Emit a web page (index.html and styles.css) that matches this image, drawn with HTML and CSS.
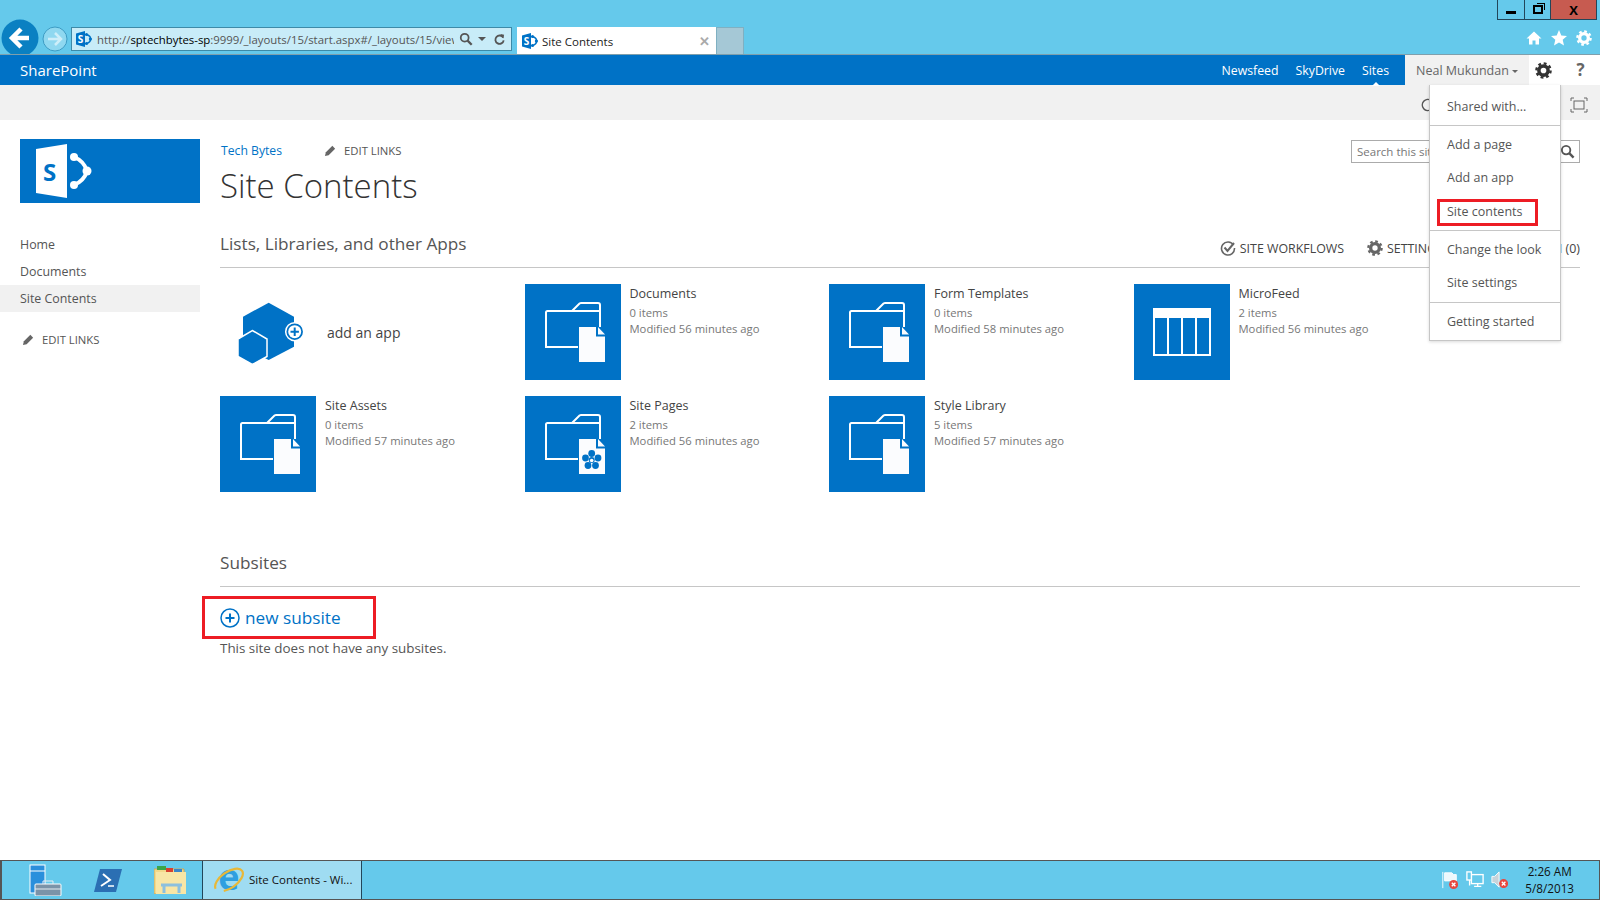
FILE: index.html
```html
<!DOCTYPE html>
<html lang="en">
<head>
    <meta charset="UTF-8">
    <title>Site Contents</title>
    <link rel="stylesheet" href="styles.css">
</head>
<body>
    <svg class="defs" width="0" height="0">
        <symbol id="gear" viewBox="0 0 24 24">
            <circle cx="12" cy="12" r="6.500" fill="none" stroke="currentColor" stroke-width="5"/>
            <circle cx="12" cy="12" r="10" fill="none" stroke="currentColor" stroke-width="3.400" stroke-dasharray="4 3.850"/>
        </symbol>
        <symbol id="pencil" viewBox="0 0 14 14">
            <path d="M1 13l1-4 7-7 3 3-7 7z" fill="currentColor"/>
        </symbol>
        <symbol id="magnifier" viewBox="0 0 16 16">
            <circle cx="9.500" cy="6.500" r="4.500" fill="none" stroke="currentColor" stroke-width="2"/>
            <path d="M6.200 9.800L1.500 14.500" stroke="currentColor" stroke-width="2.600"/>
        </symbol>
        <symbol id="favicon" viewBox="0 0 16 16">
            <path d="M0 2.500L9 0v16l-9-2.500z" fill="#0072c6"/>
            <text x="1.800" y="11.600" font-family="Open Sans" font-weight="700" font-size="10" fill="#fff">S</text>
            <path d="M10.500 3.500Q15 5 14.400 8Q15 11 10.500 12.500" fill="none" stroke="#0072c6" stroke-width="1.600"/>
            <circle cx="10.500" cy="3.500" r="1.600" fill="#0072c6"/>
            <circle cx="14.400" cy="8" r="1.600" fill="#0072c6"/>
            <circle cx="10.500" cy="12.500" r="1.600" fill="#0072c6"/>
        </symbol>
        <symbol id="folder" viewBox="0 0 96 96">
            <path d="M53 63H21V28.500a1.500 1.500 0 0 1 1.500-1.500H74M47 27l7.500-7.500a3 3 0 0 1 2-.5H73a2 2 0 0 1 2 2v22" fill="none" stroke="#fff" stroke-width="2"/>
            <path d="M54 43h17v9.500h9V78H54z" fill="#fbfcfe"/>
            <path d="M73 43l7 7.500h-7z" fill="#fbfcfe"/>
        </symbol>
        <symbol id="redx" viewBox="0 0 10 10">
            <circle cx="5" cy="5" r="5" fill="#e8473f"/>
            <path d="M3 3l4 4M7 3l-4 4" stroke="#fff" stroke-width="1.500"/>
        </symbol>
    </svg>

    <header class="chrome">
        <div class="win-row">
            <div class="win-btn win-min"><span class="glyph-min"></span></div>
            <div class="win-btn win-max"><span class="glyph-max"></span></div>
            <div class="win-btn win-close">X</div>
        </div>
        <div class="nav-row">
            <svg class="back-btn" viewBox="0 0 38 38">
                <circle cx="19" cy="19" r="18.500" fill="#0a80c2"/>
                <path d="M28 19H12M20 10l-9 9 9 9" fill="none" stroke="#fff" stroke-width="4.500"/>
            </svg>
            <svg class="fwd-btn" viewBox="0 0 26 26">
                <circle cx="13" cy="13" r="12" fill="#8fd8f0" stroke="#3d9cc4"/>
                <path d="M6 13h12M13 7l6 6-6 6" fill="none" stroke="#cdeef9" stroke-width="2.500"/>
            </svg>
            <div class="address">
                <svg class="fav"><use href="#favicon"/></svg>
                <div class="url">http://<b>sptechbytes-sp</b>:9999/_layouts/15/start.aspx#/_layouts/15/viewlsts.aspx</div>
                <svg class="addr-icon"><use href="#magnifier"/></svg>
                <span class="addr-caret"></span>
                <svg class="addr-refresh" viewBox="0 0 14 14">
                    <path d="M11 5a4.500 4.500 0 1 0 .5 3" fill="none" stroke="#555" stroke-width="2"/>
                    <path d="M8 1l4 1-1 4z" fill="#555"/>
                </svg>
            </div>
            <div class="tab">
                <svg class="fav"><use href="#favicon"/></svg>
                <span class="tab-title">Site Contents</span>
                <span class="tab-close">&#10005;</span>
            </div>
            <div class="tab-new"></div>
            <div class="chrome-tools">
                <svg class="tool" viewBox="0 0 16 16"><path d="M8 1.500L0.500 8.500H3v6h3.500v-4h3v4H13v-6h2.500z" fill="#fff"/></svg>
                <svg class="tool" viewBox="0 0 16 16"><path d="M8 0l2.300 5.400 5.700.5-4.300 3.800 1.300 5.800L8 12.500l-5 3 1.300-5.800L0 5.900l5.700-.5z" fill="#fff"/></svg>
                <svg class="tool tool-gear"><use href="#gear"/></svg>
            </div>
        </div>
    </header>

    <div class="suitebar">
        <div class="brand">SharePoint</div>
        <nav class="suite-links">
            <a>Newsfeed</a>
            <a>SkyDrive</a>
            <a class="current">Sites</a>
        </nav>
        <div class="user">Neal Mukundan<span class="caret"></span></div>
        <div class="suite-gear"><svg><use href="#gear"/></svg></div>
        <div class="suite-help">?</div>
    </div>

    <div class="ribbon">
        <svg class="ribbon-share" viewBox="0 0 14 14"><path d="M11 2.500A5.500 5.500 0 1 0 11 11.500" fill="none" stroke="#555" stroke-width="1.500"/></svg>
        <svg class="ribbon-focus" viewBox="0 0 18 16">
            <path d="M1 4V1h3M14 1h3v3M17 12v3h-3M4 15H1v-3" fill="none" stroke="#666"/>
            <rect x="4" y="4" width="10" height="8" fill="none" stroke="#666"/>
        </svg>
    </div>

    <div class="main">
        <aside class="side">
            <div class="logo">
                <svg viewBox="0 0 180 64" width="180" height="64">
                    <path d="M16 10L47 5v54l-31-5z" fill="#fff"/>
                    <text x="23" y="42" font-family="Open Sans" font-weight="700" font-size="24" fill="#0072c6">S</text>
                    <path d="M54 18Q64 22 67 32Q64 42 54 46" fill="none" stroke="#fff" stroke-width="4"/>
                    <circle cx="54" cy="18" r="4" fill="#fff"/>
                    <circle cx="67" cy="32" r="4.500" fill="#fff"/>
                    <circle cx="54" cy="46" r="4" fill="#fff"/>
                </svg>
            </div>
            <ul class="side-nav">
                <li>Home</li>
                <li>Documents</li>
                <li class="selected">Site Contents</li>
            </ul>
            <div class="edit-links side-edit"><svg><use href="#pencil"/></svg>EDIT LINKS</div>
        </aside>

        <section class="content">
            <div class="page-head">
                <div>
                    <div class="crumbs">
                        <a class="site-link">Tech Bytes</a>
                        <div class="edit-links"><svg><use href="#pencil"/></svg>EDIT LINKS</div>
                    </div>
                    <h1>Site Contents</h1>
                </div>
                <div class="search">
                    <span>Search this site</span>
                    <svg><use href="#magnifier"/></svg>
                </div>
            </div>

            <div class="section-head">
                <h2>Lists, Libraries, and other Apps</h2>
                <div class="actions">
                    <span class="action">
                        <svg viewBox="0 0 16 16"><path d="M13.500 5A6.500 6.500 0 1 0 14.500 8" fill="none" stroke="#666" stroke-width="1.600"/><path d="M4.500 7.500l3 3.500L14 3" fill="none" stroke="#666" stroke-width="2"/></svg>
                        SITE WORKFLOWS
                    </span>
                    <span class="action"><svg><use href="#gear"/></svg>SETTINGS</span>
                    <span class="action recycle">RECYCLE BIN (0)</span>
                </div>
            </div>

            <div class="apps">
                <div class="app add-app">
                    <svg class="tile-plain" viewBox="0 0 96 96">
                        <path d="M48.700 18.700L74 32.700v30L48.700 76 23 62.700v-30z" fill="#0072c6"/>
                        <path d="M32.300 46.500L47 55v17.500l-14.700 8-14.300-8V55z" fill="#0072c6" stroke="#fff" stroke-width="1.500"/>
                        <circle cx="74.700" cy="47.700" r="9" fill="#0072c6" stroke="#fff" stroke-width="1.500"/>
                        <circle cx="74.700" cy="47.700" r="6.500" fill="#fff"/>
                        <path d="M70.500 47.700h8.400M74.700 43.500v8.400" stroke="#0072c6" stroke-width="2"/>
                    </svg>
                    <span class="add-label">add an app</span>
                </div>
                <div class="app">
                    <svg class="tile"><use href="#folder"/></svg>
                    <div class="app-info"><div class="app-name">Documents</div><div>0 items</div><div>Modified 56 minutes ago</div></div>
                </div>
                <div class="app">
                    <svg class="tile"><use href="#folder"/></svg>
                    <div class="app-info"><div class="app-name">Form Templates</div><div>0 items</div><div>Modified 58 minutes ago</div></div>
                </div>
                <div class="app">
                    <svg class="tile" viewBox="0 0 96 96">
                        <rect x="19" y="24" width="58" height="48" fill="#fff"/>
                        <rect x="21" y="34" width="12" height="36" fill="#0072c6"/>
                        <rect x="35" y="34" width="12" height="36" fill="#0072c6"/>
                        <rect x="49" y="34" width="12" height="36" fill="#0072c6"/>
                        <rect x="63" y="34" width="12" height="36" fill="#0072c6"/>
                    </svg>
                    <div class="app-info"><div class="app-name">MicroFeed</div><div>2 items</div><div>Modified 56 minutes ago</div></div>
                </div>
                <div class="app">
                    <svg class="tile"><use href="#folder"/></svg>
                    <div class="app-info"><div class="app-name">Site Assets</div><div>0 items</div><div>Modified 57 minutes ago</div></div>
                </div>
                <div class="app">
                    <svg class="tile" viewBox="0 0 96 96">
                        <use href="#folder" width="96" height="96"/>
                        <g fill="#0072c6">
                            <circle cx="66.700" cy="57.500" r="3.400"/>
                            <circle cx="73" cy="62" r="3.400"/>
                            <circle cx="70.500" cy="69.500" r="3.400"/>
                            <circle cx="63" cy="69.500" r="3.400"/>
                            <circle cx="60.500" cy="62" r="3.400"/>
                            <circle cx="66.700" cy="64" r="3"/>
                        </g>
                        <circle cx="66.700" cy="64.500" r="1.800" fill="#fff"/>
                    </svg>
                    <div class="app-info"><div class="app-name">Site Pages</div><div>2 items</div><div>Modified 56 minutes ago</div></div>
                </div>
                <div class="app">
                    <svg class="tile"><use href="#folder"/></svg>
                    <div class="app-info"><div class="app-name">Style Library</div><div>5 items</div><div>Modified 57 minutes ago</div></div>
                </div>
            </div>

            <div class="section-head subsites-head">
                <h2>Subsites</h2>
            </div>
            <a class="new-subsite">
                <svg viewBox="0 0 20 20">
                    <circle cx="10" cy="10" r="9" fill="none" stroke="#0072c6" stroke-width="1.500"/>
                    <path d="M5.500 10h9M10 5.500v9" stroke="#0072c6" stroke-width="2"/>
                </svg>
                new subsite
            </a>
            <p class="no-subsites">This site does not have any subsites.</p>
        </section>
    </div>

    <footer class="taskbar">
        <div class="pin">
            <svg width="34" height="32" viewBox="0 0 34 32">
                <rect x="1" y="1" width="15" height="28" fill="#2a8fdc" stroke="#fff"/>
                <path d="M1 7h15" stroke="#fff"/>
                <rect x="6" y="20" width="26" height="12" rx="1" fill="#7b93a8" stroke="#fff"/>
                <path d="M14 20v-3h10v3M6 25h26" fill="none" stroke="#e6edf2"/>
            </svg>
        </div>
        <div class="pin">
            <svg width="28" height="23" viewBox="0 0 28 23">
                <path d="M6 0h22l-6 23H0z" fill="#2b6fb3"/>
                <path d="M9 5l7 6-9 6" fill="none" stroke="#fff" stroke-width="2"/>
                <path d="M14 17h6" stroke="#fff" stroke-width="1.500"/>
            </svg>
        </div>
        <div class="pin">
            <svg width="32" height="28" viewBox="0 0 32 28">
                <path d="M0 3h30v25H0z" fill="#f3d98a" stroke="#c9a95a"/>
                <path d="M3 0h9v4H3z" fill="#3aa64a"/>
                <path d="M12 2h7v4h-7z" fill="#d8402f"/>
                <path d="M20 3h8v4h-8z" fill="#3a85c9"/>
                <path d="M2 6h30v22H2z" fill="#f8e6a6"/>
                <path d="M10 27v-8h15v8M7 19h21" fill="none" stroke="#8cc0de" stroke-width="3"/>
            </svg>
        </div>
        <div class="task-active">
            <svg width="32" height="32" viewBox="0 0 32 32">
                <text x="16" y="26" text-anchor="middle" font-family="Open Sans" font-weight="700" font-size="36" fill="#2f9fe0">e</text>
                <ellipse cx="16" cy="16" rx="16" ry="8" fill="none" stroke="#e8b838" stroke-width="2.200" transform="rotate(-35 16 16)" stroke-dasharray="30 9 40"/>
            </svg>
            <span>Site Contents - Wi...</span>
        </div>
        <div class="tray">
            <svg class="tray-icon" viewBox="0 0 20 20">
                <path d="M2 1v18M4 2h8l2 2h3v7H4z" fill="#eef8fc" stroke="#fff"/>
                <use href="#redx" x="9" y="10" width="10" height="10"/>
            </svg>
            <svg class="tray-icon" viewBox="0 0 20 20">
                <rect x="6" y="4" width="13" height="10" fill="none" stroke="#fff" stroke-width="1.500"/>
                <rect x="1" y="1" width="5" height="9" fill="#65c9eb" stroke="#fff" stroke-width="1.500"/>
                <path d="M4 10v6M9 17h8M13 14v3" stroke="#fff" stroke-width="1.500"/>
            </svg>
            <svg class="tray-icon" viewBox="0 0 20 20">
                <path d="M1 6h3l5-5v17l-5-5H1z" fill="#c7d3da" stroke="#fff"/>
                <use href="#redx" x="9" y="9" width="10" height="10"/>
            </svg>
            <div class="clock"><div>2:26 AM</div><div>5/8/2013</div></div>
        </div>
    </footer>

    <div class="menu">
        <div class="menu-group first">
            <div class="menu-item">Shared with...</div>
        </div>
        <div class="menu-group">
            <div class="menu-item">Add a page</div>
            <div class="menu-item">Add an app</div>
            <div class="menu-item marked">Site contents</div>
        </div>
        <div class="menu-group">
            <div class="menu-item">Change the look</div>
            <div class="menu-item">Site settings</div>
        </div>
        <div class="menu-group">
            <div class="menu-item">Getting started</div>
        </div>
    </div>
</body>
</html>
```

FILE: styles.css
```css
* {
    box-sizing: border-box;
}
body {
    margin: 0;
    height: 900px;
    display: flex;
    flex-direction: column;
    overflow: hidden;
    background: #fff;
    color: #444;
    font-family: "Open Sans", sans-serif;
}
h1, h2, p, ul {
    margin: 0;
    padding: 0;
}
svg {
    display: block;
    flex: none;
}
.defs {
    position: absolute;
}

/* browser chrome */
.chrome {
    height: 55px;
    background: #65c9eb;
    border-bottom: 1px solid #7f9fac;
    overflow: hidden;
}
.win-row {
    display: flex;
    justify-content: flex-end;
    height: 20px;
    padding-right: 3px;
}
.win-btn {
    display: flex;
    align-items: center;
    justify-content: center;
    height: 20px;
    border: 1px solid #22465a;
    border-top: 0;
    border-left-width: 1px;
    color: #000;
    font-size: 13px;
    font-weight: 700;
}
.win-min { width: 28px; }
.win-max { width: 26px; border-left: 0; }
.win-close { width: 46px; border-left: 0; background: #c75b50; }
.glyph-min { width: 10px; height: 3px; margin-top: 5px; background: #000; }
.glyph-max { width: 10px; height: 9px; border: 2px solid #000; box-shadow: 2px -2px 0 -1px #65c9eb, 3px -3px 0 -1px #000; }
.nav-row {
    display: flex;
    margin-top: 7px;
    height: 27px;
}
.back-btn {
    width: 38px;
    height: 38px;
    margin: -8px 0 0 1px;
}
.fwd-btn {
    width: 26px;
    height: 26px;
    margin: -1px 0 0 3px;
}
.address {
    display: flex;
    align-items: center;
    width: 441px;
    height: 24px;
    margin-left: 3px;
    padding: 0 5px 0 4px;
    background: #c8ecf8;
    border: 1px solid #3d8aa8;
    font-size: 11.400px;
    color: #555;
}
.fav {
    width: 16px;
    height: 16px;
}
.url {
    width: 362px;
    margin-left: 5px;
    overflow: hidden;
    white-space: nowrap;
}
.url b {
    font-weight: 400;
    color: #000;
}
.addr-icon {
    width: 14px;
    height: 14px;
    margin-left: 5px;
    color: #555;
    transform: scaleX(-1);
}
.addr-caret {
    margin-left: 5px;
    border: 4px solid transparent;
    border-top-color: #555;
    border-bottom: 0;
}
.addr-refresh {
    width: 13px;
    height: 13px;
    margin-left: 7px;
}
.tab {
    display: flex;
    align-items: center;
    width: 199px;
    margin-left: 5px;
    padding: 0 6px 0 5px;
    background: #fff;
    font-size: 11.500px;
    color: #222;
}
.tab-title {
    margin-left: 4px;
    padding-top: 1px;
}
.tab-close {
    margin-left: auto;
    color: #aaa;
    font-size: 13px;
    font-weight: 700;
}
.tab-new {
    width: 28px;
    background: #a5c8d6;
    border: 1px solid #7fb0c2;
    border-bottom: 0;
}
.chrome-tools {
    display: flex;
    gap: 9px;
    margin: 3px 8px 0 auto;
}
.tool {
    width: 16px;
    height: 16px;
}
.tool-gear {
    color: #fff;
}

/* suite bar */
.suitebar {
    display: flex;
    align-items: center;
    height: 30px;
    background: #0072c6;
    color: #fff;
}
.brand {
    margin-left: 20px;
    font-size: 15px;
}
.suite-links {
    display: flex;
    gap: 17px;
    margin-left: auto;
    margin-right: 16px;
    font-size: 12.300px;
}
.suite-links .current {
    position: relative;
}
.suite-links .current::after {
    content: "";
    position: absolute;
    left: 50%;
    bottom: -7px;
    margin-left: -4px;
    border: 4px solid transparent;
    border-bottom-color: #fff;
    border-top: 0;
}
.user {
    display: flex;
    align-items: center;
    width: 124px;
    height: 100%;
    padding-left: 11px;
    background: #f1f1f1;
    color: #666;
    font-size: 12.500px;
    white-space: nowrap;
}
.caret {
    margin-left: 3px;
    margin-top: 2px;
    border: 3.500px solid transparent;
    border-top-color: #666;
    border-bottom: 0;
}
.suite-gear {
    display: flex;
    align-items: center;
    padding-left: 6px;
    width: 32px;
    height: 100%;
    background: #fff;
    color: #333;
}
.suite-gear svg {
    width: 17px;
    height: 17px;
}
.suite-help {
    width: 39px;
    height: 100%;
    background: #fff;
    color: #666;
    font-size: 17px;
    font-weight: 700;
    line-height: 30px;
    text-align: center;
}

/* ribbon strip */
.ribbon {
    display: flex;
    align-items: center;
    height: 35px;
    padding: 4px 12px 0 0;
    background: #f1f1f1;
}
.ribbon-share {
    width: 14px;
    height: 14px;
    margin-left: 1420px;
}
.ribbon-focus {
    width: 18px;
    height: 16px;
    margin-left: auto;
}

/* page */
.main {
    display: flex;
    flex: 1;
}
.side {
    width: 200px;
    padding-top: 19px;
}
.logo {
    width: 180px;
    height: 64px;
    margin-left: 20px;
    background: #0072c6;
}
.side-nav {
    margin-top: 28px;
    list-style: none;
    font-size: 12.400px;
    color: #555;
}
.side-nav li {
    height: 27px;
    padding-left: 20px;
    line-height: 27px;
}
.side-nav .selected {
    background: #f1f1f1;
    line-height: 28px;
}
.edit-links {
    display: flex;
    align-items: center;
    color: #555;
    font-size: 11.300px;
}
.edit-links svg {
    width: 13px;
    height: 13px;
    margin-right: 7px;
    color: #666;
}
.side-edit {
    margin: 20px 0 0 22px;
}
.content {
    flex: 1;
    padding: 20px 20px 0;
}
.page-head {
    display: flex;
    justify-content: space-between;
}
.crumbs {
    display: flex;
    align-items: center;
    height: 20px;
}
.site-link {
    width: 103px;
    margin-left: 1px;
    color: #0072c6;
    font-size: 12.200px;
}
h1 {
    margin-top: 1px;
    color: #333;
    font-size: 33px;
    font-weight: 300;
    line-height: 50px;
}
.search {
    display: flex;
    align-items: center;
    justify-content: space-between;
    width: 229px;
    height: 23px;
    padding: 0 4px 0 5px;
    border: 1px solid #ababab;
    color: #777;
    font-size: 11.500px;
}
.search svg {
    width: 15px;
    height: 15px;
    color: #555;
    transform: scaleX(-1);
}
.section-head {
    display: flex;
    justify-content: space-between;
    height: 39px;
    margin-top: 18px;
    border-bottom: 1px solid #c6c6c6;
}
h2 {
    color: #555;
    font-size: 17.200px;
    font-weight: 400;
    line-height: 30px;
}
.actions {
    display: flex;
    align-items: center;
    gap: 23px;
    height: 38px;
    font-size: 12.400px;
    color: #444;
}
.action {
    display: flex;
    align-items: center;
    gap: 4px;
}
.action svg {
    width: 16px;
    height: 16px;
    color: #666;
}
.recycle {
    margin-left: 22px;
}
.apps {
    display: grid;
    grid-template-columns: repeat(4, 304.500px);
    grid-auto-rows: 96px;
    row-gap: 16px;
    margin-top: 16px;
}
.app {
    display: flex;
}
.tile {
    width: 96px;
    height: 96px;
    background: #0072c6;
}
.tile-plain {
    width: 96px;
    height: 96px;
}
.app-info {
    margin-left: 9px;
    color: #777;
    font-size: 11.250px;
    line-height: 16px;
}
.app-name {
    margin-bottom: 2px;
    color: #444;
    font-size: 12.500px;
    line-height: 19px;
}
.add-app {
    align-items: center;
}
.add-label {
    margin-left: 11px;
    color: #444;
    font-size: 14px;
}
.subsites-head {
    margin-top: 56px;
}
.new-subsite {
    display: flex;
    align-items: center;
    gap: 5px;
    width: 174px;
    height: 43px;
    margin: 9px 0 0 -18px;
    padding-left: 15px;
    border: 3px solid #ed1c24;
    color: #0072c6;
    font-size: 17.200px;
}
.new-subsite svg {
    width: 20px;
    height: 20px;
}
.no-subsites {
    color: #555;
    font-size: 13.400px;
    line-height: 18px;
}

/* taskbar */
.taskbar {
    display: flex;
    height: 40px;
    padding-left: 13px;
    background: #65c9eb;
    border: 2px solid #555;
    border-width: 1px 1px 1px 2px;
}
.pin {
    display: flex;
    align-items: center;
    justify-content: center;
    width: 62px;
}
.task-active {
    display: flex;
    align-items: center;
    gap: 4px;
    width: 160px;
    margin-left: 1px;
    padding-left: 10px;
    padding-bottom: 1px;
    background: #9fdcf2;
    border-left: 1px solid #22465a;
    border-right: 1px solid #22465a;
    color: #111;
    font-size: 11.500px;
    white-space: nowrap;
}
.tray {
    display: flex;
    align-items: center;
    margin-left: auto;
    padding-right: 25px;
}
.tray-icon {
    width: 18px;
    height: 18px;
    margin-right: 7px;
}
.clock {
    margin-left: 9px;
    color: #111;
    font-size: 11.700px;
    line-height: 17px;
    text-align: center;
}

/* site actions menu */
.menu {
    position: absolute;
    left: 1429px;
    top: 85px;
    width: 132px;
    background: #fff;
    border: 1px solid #c6c6c6;
    border-top: 0;
    box-shadow: 0 1px 3px rgba(0, 0, 0, 0.15);
    color: #555;
    font-size: 12.500px;
}
.menu-group {
    padding: 2px 0;
    border-bottom: 1px solid #c6c6c6;
}
.menu-group.first {
    padding-top: 5px;
    padding-bottom: 1px;
}
.menu-group:last-child {
    border-bottom: 0;
}
.menu-item {
    height: 33.500px;
    padding-left: 17px;
    line-height: 33px;
    white-space: nowrap;
}
.menu-item.marked {
    width: 101px;
    height: 27px;
    margin: 4px 0 2px 7px;
    padding-left: 7px;
    border: 3px solid #ed1c24;
    line-height: 19px;
}
```
